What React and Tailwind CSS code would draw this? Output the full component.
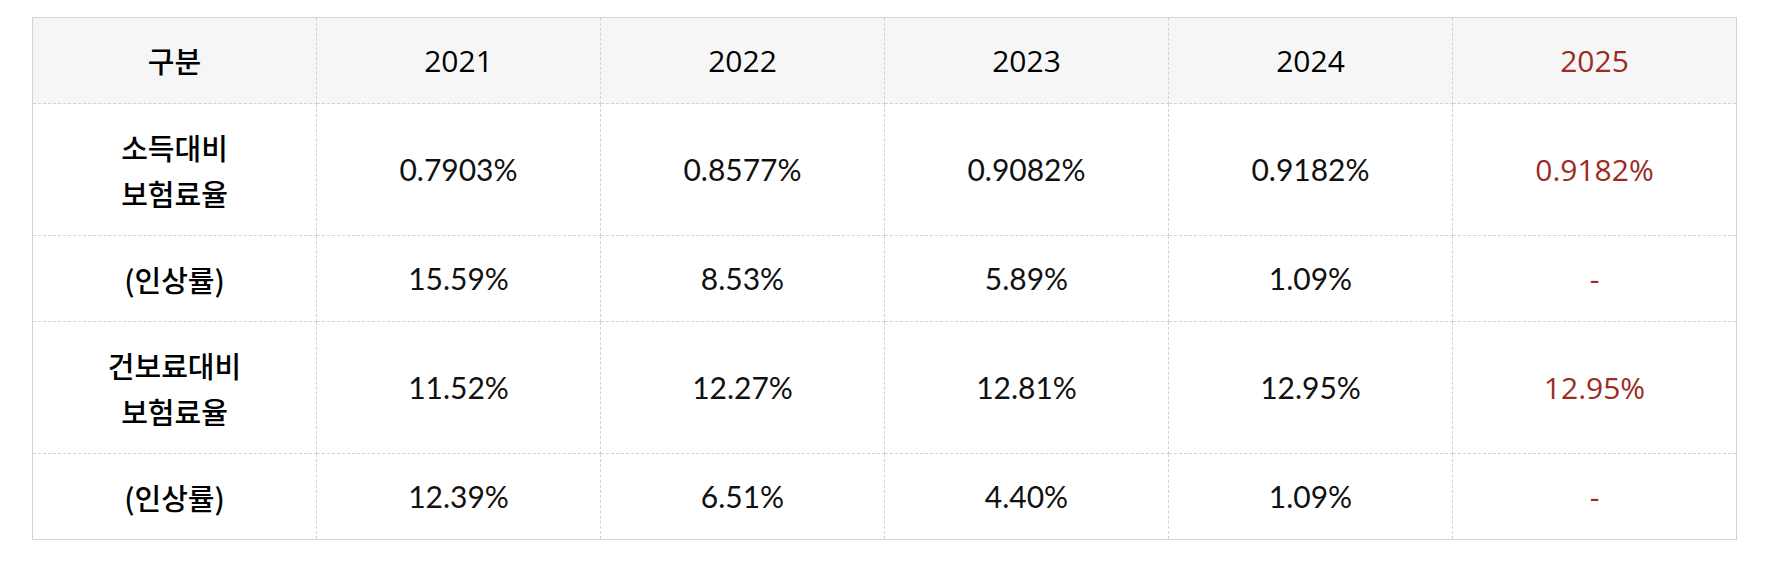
const years = ["2021", "2022", "2023", "2024", "2025"];

const rows = [
  { label: ["소득대비", "보험료율"], values: ["0.7903%", "0.8577%", "0.9082%", "0.9182%", "0.9182%"], tall: true },
  { label: ["(인상률)"], values: ["15.59%", "8.53%", "5.89%", "1.09%", "-"] },
  { label: ["건보료대비", "보험료율"], values: ["11.52%", "12.27%", "12.81%", "12.95%", "12.95%"], tall: true },
  { label: ["(인상률)"], values: ["12.39%", "6.51%", "4.40%", "1.09%", "-"] },
];

const korean = { fontFamily: '"Noto Sans CJK KR", sans-serif' };
const numFont = { fontFamily: 'Lato, "Noto Sans CJK KR", sans-serif' };
const redFont = { fontFamily: '"Open Sans", "Noto Sans CJK KR", sans-serif' };

export default function App() {
  return (
    <div className="bg-white px-[32px] pt-[17px] pb-[27px]">
      <table className="w-full table-fixed border-collapse border border-solid border-[#d3d3d3] text-center">
        <thead>
          <tr className="h-[86px] bg-[#f6f6f6]">
            <th className="border border-dashed border-[#d3d3d3] text-[29px] font-medium text-black" style={korean}>
              구분
            </th>
            {years.map((y, i) => (
              <th
                key={y}
                className={`border border-dashed border-[#d3d3d3] text-[30px] font-normal ${i === 4 ? "text-[#9b2c1f]" : "text-black"}`}
                style={redFont}
              >
                {y}
              </th>
            ))}
          </tr>
        </thead>
        <tbody>
          {rows.map((row, r) => (
            <tr key={r} className={row.tall ? "h-[132px]" : "h-[86px]"}>
              <td className="border border-dashed border-[#d3d3d3] text-[29px] font-medium leading-[46px] text-black" style={korean}>
                {row.label.map((l) => (
                  <div key={l}>{l}</div>
                ))}
              </td>
              {row.values.map((v, i) => (
                <td
                  key={i}
                  className={`border border-dashed border-[#d3d3d3] text-[30px] ${i === 4 ? "text-[#9b2c1f]" : "text-[#111]"}`}
                  style={i === 4 ? redFont : numFont}
                >
                  {v}
                </td>
              ))}
            </tr>
          ))}
        </tbody>
      </table>
    </div>
  );
}
